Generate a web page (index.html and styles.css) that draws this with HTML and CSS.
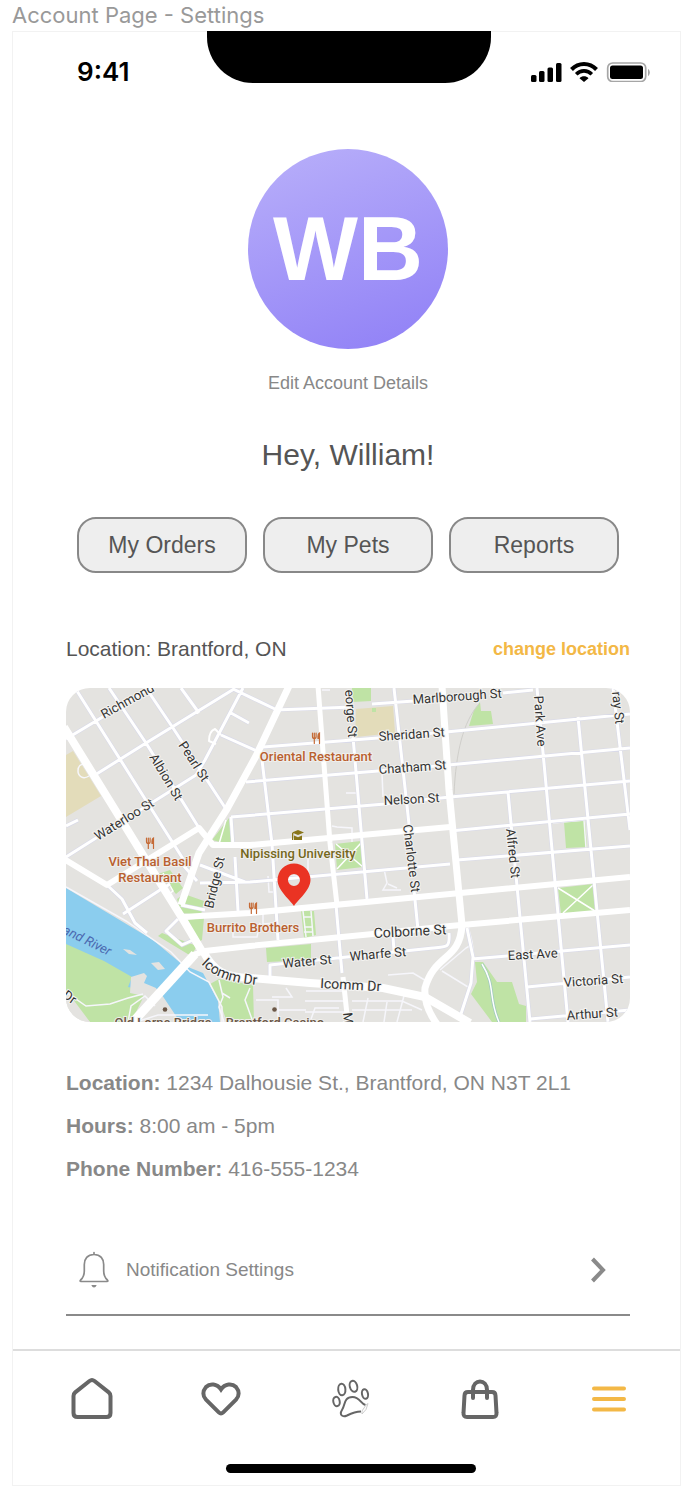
FILE: index.html
```html
<!DOCTYPE html>
<html lang="en">
<head>
<meta charset="utf-8">
<meta name="viewport" content="width=device-width, initial-scale=1">
<title>Account Page - Settings</title>
<link rel="stylesheet" href="styles.css">
</head>
<body>
<p class="frame-label">Account Page - Settings</p>
<div class="screen">
  <header class="status-bar">
    <span class="clock">9:41</span>
    <span class="notch"></span>
    <span class="indicators">
      <svg width="120" height="20" viewBox="0 0 120 20" aria-hidden="true">
        <rect x="1" y="13" width="5.500" height="7" rx="1.500"/>
        <rect x="9" y="9" width="5.500" height="11" rx="1.500"/>
        <rect x="17.500" y="5.500" width="5.500" height="14.500" rx="1.500"/>
        <rect x="26" y="1" width="5.500" height="19" rx="1.500"/>
        <g fill="none" stroke="#000" stroke-width="4">
          <path d="M41.500 7.500C48.500 .2 59.500 .2 66.500 7.500"/>
          <path d="M46.200 12.200C50.600 7.800 57.400 7.800 61.800 12.200" stroke-width="3.600"/>
        </g>
        <path d="M49.500 16.300c2.500-2.600 6.500-2.600 9 0L54 20z"/>
        <rect x="77.700" y="1" width="38" height="18.500" rx="5" fill="none" stroke="#a6a6a6" stroke-width="1.700"/>
        <rect x="80" y="3.500" width="33" height="13.500" rx="2.500"/>
        <path d="M118 7v7c2.400-1.200 2.400-5.800 0-7z" fill="#a6a6a6"/>
      </svg>
    </span>
  </header>

  <main class="content">
    <div class="avatar">WB</div>
    <a class="edit-link" href="#">Edit Account Details</a>
    <h1 class="greeting">Hey, William!</h1>

    <div class="shortcuts">
      <button class="shortcut" type="button">My Orders</button>
      <button class="shortcut" type="button">My Pets</button>
      <button class="shortcut" type="button">Reports</button>
    </div>

    <div class="location-row">
      <h2 class="location-title">Location: Brantford, ON</h2>
      <a class="change-link" href="#">change location</a>
    </div>

    <svg class="map" viewBox="66 688 564 334" role="img" aria-label="Map of Brantford">
      <rect x="66" y="688" width="564" height="334" fill="#e4e3e0"/>
      <!-- sand and parks -->
      <path d="M66 755l7-4 28 45-35 21zM356 709l37-3 2 27-40 4z" fill="#e3dcba"/>
      <g fill="#bfe3a5">
        <path d="M352 688h19v13l-18 1zM372 708h4v4h-4zM480 702l1 9 10 0 2 13-24 2 5-16zM564 822l21-1 2 26-21 1z"/>
        <path d="M229 818l3 27-20-5zM335 844l26-3 2 26-26 3zM558 888l35-4 2 27-34 3zM266 948l45-4v16l-44 2z"/>
        <path d="M301 911h13l2 24-12 3zM158 874l12-4 13 18-7 6zM184 894l20 7-3 14-20-2-4-14zM187 920l17-2-2 22-4 2zM162 933l35 13-6 10-33-20z"/>
        <path d="M475 962h8l14 20h15l7 22 7 2v16h-34l-21-28 6-12z"/>
        <path d="M210 984l9-5 34 6 1 37h-27l-5-14z"/>
      </g>
      <path d="M66 888l47 28 40 24 30 25 20 8 15 28 2 21h-40l-20-30-42-4-52-30z" fill="#8bcdee"/>
      <path d="M66 944l38 17 28 16-4 10 20 4-6 31H90l-24-23z" fill="#bfe3a5"/>
      <path d="M66 990l24 32H66zM131 977l13-4 3 3-3 7 12 5 20 34h-45l13-26-14-3z" fill="#e4e3e0"/>
      <path d="M123 949l7 1 7 5-8-1zM151 963l8-1 6 7-7 1z" fill="#e4e3e0"/>
      <!-- footways and lanes -->
      <g fill="none" stroke="#f6f6fb" stroke-width="1.500">
        <path d="M66 887l60 34 45 31 19 20 19 10 13 25v15M66 992l20 14 24-2 18-6 15-4M128 1022l3-16 14-10 10 10M136 1022l22-7h50"/>
        <path d="M219 980l4 17-4 10 5 15M250 988l-5 12 8 22M222 993l8 5M256 1000h22v22M272 997h20l-6-9M278 1010h28M306 991h40v31M305 1001h40M305 1012h40"/>
        <path d="M352 1001h50l20 9M352 1010h60M388 975l25-2 15 9M440 970l26-22 5-3M442 971l26 16M397 1022l8-30M310 1022l5-14h24M363 1022l5-24 M384 1022l3-20"/>
        <path d="M332 826l5 1 15 1v14M346 793h12M382 773l1 24M322 690h8M268 876l1 16h6M278 877l30-2v-18M384 869l3 14-4 7h18M388 884l9 4"/>
        <path d="M303 911l3 26M311 911l2 25M304 927h8M304 932h8M304 917h8M233 925v12h24l3-14M263 912v12l12-1"/>
        <path d="M553 823l31-3 2 28M468 926l4 16 2 15"/>
        <path d="M89 776c-6 4-11 0-11-5s3-7 6-7"/>
      </g>
      <path d="M479 704c-16 18-23 48-25 90" fill="none" stroke="#cfceca"/>
      <path d="M482 964c14 22 6 34 17 58" fill="none" stroke="#9fc9c0" stroke-width="3"/>
      <path d="M482 964c14 22 6 34 17 58M336 844l27 23M361 843l-24 26M558 888l37 23M593 885l-30 28M226 820l-7 24M163 873l10 18-7 5" fill="none" stroke="#fff" stroke-width="1.500"/>
      <!-- streets: casing first, surface above -->
      <g fill="none" stroke="#d9dae8" stroke-width="4.200" stroke-linejoin="round">
        <use href="#minor"/>
      </g>
      <g fill="none" stroke="#fff" stroke-width="3" stroke-linejoin="round">
        <path id="minor" d="M77 691l70 111 38 60M109 688l37 55 53 85M146 688l27 40 53 81M181 688l18 25M66 739l85-51M95 775l51-32 88-54M66 857l87-55 43-27 9-15 38-72M233 689l44 21M231 713l18 10M221 735l36 16M66 826l12-6M275 710l78-3M372 704l42-3M503 693l30-3M263 747l115-9 68-6 184-18M246 782l132-11 70-6 182-17M231 817l154-13 65-7 180-16M231 817l2 29M262 760l10 84 6 96M353 737l14 162M394 688l15 136M414 890l4 40M537 688l16 172 15 162M578 717l14 143 16 162M613 688l17 142M508 792l22 230M450 831l180-17M457 860l173-14M200 883l50-1 200-18M245 882l-45-17M472 959l158-14M527 987l103-10M530 1019l100-9M270 977v-12l163-17c15-1 17-1 16-15M393 937l1 14M467 928l6 29-2 26-11 34M336 905l6 68M107 885l15 14 13 24 12 10M123 914l37-24 10-6M178 919l-12 12 16 14 11-5M235 857l3 54M181 905l24 5M197 881l-14-16"/>
        <path d="M221 735l-6-6q-6 2-6 12l7 3" stroke-width="2"/>
      </g>
      <g fill="none" stroke="#fff" stroke-linejoin="round">
        <path d="M64 727l82 133 38 61 19 32" stroke-width="8"/>
        <path d="M289 686l-33 70-29 53-28 44-18 52" stroke-width="7"/>
        <path d="M64 859l43 26 92-57 14 17h37l200-18" stroke-width="6"/>
        <path d="M183 917l67-4 200-19 180-17" stroke-width="6"/>
        <path d="M131 1024l62-69 12-4 45-5 123-12 77-8 180-16" stroke-width="6"/>
        <path d="M133 1022l62-68" stroke-width="9"/>
        <path d="M203 951c11 21 22 26 47 27l60 5 73 5 42 9 45 26" stroke-width="8"/>
        <path d="M318 686l12 157 7 62M343 977l5 47" stroke-width="5"/>
        <path d="M442 686l7 104 13 135c-2 36-27 28-37 63-1 12 3 24 12 36" stroke-width="7"/>
      </g>
      <!-- street names -->
      <g class="street">
        <text transform="translate(104 719) rotate(-29)">Richmond</text>
        <text transform="translate(149 757) rotate(59)">Albion St</text>
        <text transform="translate(178 745) rotate(57)">Pearl St</text>
        <text transform="translate(98 841) rotate(-32)">Waterloo St</text>
        <text transform="translate(213 909) rotate(-77)">Bridge St</text>
        <text transform="translate(345 690) rotate(86)">eorge St</text>
        <text transform="translate(413 704) rotate(-4)">Marlborough St</text>
        <text transform="translate(379 741) rotate(-4)">Sheridan St</text>
        <text transform="translate(379 774) rotate(-4)">Chatham St</text>
        <text transform="translate(384 805) rotate(-3)">Nelson St</text>
        <text transform="translate(403 825) rotate(83)">Charlotte St</text>
        <text transform="translate(534 696) rotate(86)">Park Ave</text>
        <text transform="translate(612 692) rotate(84)">ray St</text>
        <text transform="translate(506 829) rotate(84)">Alfred St</text>
        <text class="street-main" transform="translate(374 938) rotate(-3)">Colborne St</text>
        <text transform="translate(283 968) rotate(-5)">Water St</text>
        <text transform="translate(350 961) rotate(-5)">Wharfe St</text>
        <text transform="translate(508 960) rotate(-3)">East Ave</text>
        <text transform="translate(564 987) rotate(-4)">Victoria St</text>
        <text transform="translate(567 1020) rotate(-4)">Arthur St</text>
        <path id="icomm" d="M201 964c16 16 36 20 70 22" fill="none" stroke="none"/>
        <text class="street-main"><textPath href="#icomm">Icomm Dr</textPath></text>
        <text class="street-main" transform="translate(320 988) rotate(3)">Icomm Dr</text>
        <text transform="translate(343 1013) rotate(84)">M</text>
        <text transform="translate(62 997) rotate(35)">Dr</text>
      </g>
      <text class="river" transform="translate(62 933) rotate(26)">and River</text>
      <!-- places -->
      <g class="place food">
        <text x="316" y="761">Oriental Restaurant</text>
        <text x="150" y="866">Viet Thai Basil</text>
        <text x="150" y="882">Restaurant</text>
        <text x="253" y="932">Burrito Brothers</text>
      </g>
      <text class="place school" x="298" y="858">Nipissing University</text>
      <g class="place landmark">
        <text x="163" y="1027">Old Lorne Bridge</text>
        <text x="275" y="1027">Brantford Casino</text>
      </g>
      <g id="cutlery" fill="none" stroke="#c56a35" stroke-linecap="round">
        <path d="M312.500 733v3.500q0 2 1.800 2t1.800-2V733M314.300 733v5M314.300 738.500v5" stroke-width="1.200"/>
        <path d="M319.500 738v-5q-1.800 1-1.500 5.500h1.500v5" fill="#c56a35" stroke-width="1.200"/>
      </g>
      <use href="#cutlery" x="-166" y="105"/>
      <use href="#cutlery" x="-63" y="170"/>
      <path d="M292 832.500l6-2.500 6 2.500-6 2.500zM294 835.500l4 1.700 4-1.700v4.500h-8zM292 833v7h1.300v-7z" fill="#887519"/>
      <circle cx="165" cy="1009.500" r="2.300" fill="#6b5747"/>
      <circle cx="274.500" cy="1009.500" r="2.300" fill="#6b5747"/>
      <path d="M294 906c-4-6-16.500-16-16.500-26a16.500 16.500 0 0 1 33 0c0 10-12.500 20-16.500 26zM294 874a6 6 0 1 0 0 12 6 6 0 1 0 0-12z" fill="#ea3323" fill-rule="evenodd"/>
    </svg>

    <dl class="details">
      <div class="detail"><dt>Location:</dt> <dd>1234 Dalhousie St., Brantford, ON N3T 2L1</dd></div>
      <div class="detail"><dt>Hours:</dt> <dd>8:00 am - 5pm</dd></div>
      <div class="detail"><dt>Phone Number:</dt> <dd>416-555-1234</dd></div>
    </dl>

    <a class="setting" href="#">
      <svg width="30" height="38" viewBox="0 0 30 38" aria-hidden="true">
        <path d="M15 3.500C8.500 3.500 5.300 8 5.300 13.500V20c0 5-1.500 7-3.700 9-.8.900-.6 1.500.4 1.500h26c1 0 1.200-.6.400-1.500-2.200-2-3.700-4-3.700-9v-6.500C24.700 8 21.500 3.500 15 3.500zM15 1.500v2" fill="none" stroke="#8a8a8a" stroke-width="1.700" stroke-linecap="round"/>
        <path d="M12.300 34h5.400q-1 2.500-2.700 2.500T12.300 34z" fill="#8a8a8a"/>
      </svg>
      <span class="setting-name">Notification Settings</span>
      <svg width="16" height="26" viewBox="0 0 16 26" aria-hidden="true">
        <path d="M2.500 2l10.500 11L2.500 24" fill="none" stroke="#8a8a8a" stroke-width="4"/>
      </svg>
    </a>
  </main>

  <footer class="bottom">
    <nav class="tab-bar" aria-label="Main">
      <button class="tab" type="button" aria-label="Home">
        <svg width="44" height="44" viewBox="0 0 44 44"><path d="M3.500 19c0-1.500.5-2.600 1.700-3.600L19.500 4c1.700-1.400 3.300-1.400 5 0l14.300 11.400c1.200 1 1.700 2.100 1.700 3.600v17c0 2.500-1.500 4-4 4h-29c-2.500 0-4-1.500-4-4z"/></svg>
      </button>
      <button class="tab" type="button" aria-label="Favourites">
        <svg width="44" height="44" viewBox="0 0 44 44"><path d="M22 12.500c-4-6-11-6.500-15-2.500-3.500 4.200-3.500 9 0 12.700l12.800 12.700c1.600 1.600 2.800 1.600 4.400 0L37 22.700c3.500-3.700 3.500-8.500 0-12.700-4-4-11-3.500-15 2.500z"/></svg>
      </button>
      <button class="tab" type="button" aria-label="Pets">
        <svg width="44" height="44" viewBox="0 0 44 44">
          <g class="paw">
            <ellipse cx="7.500" cy="24.500" rx="3.200" ry="4.700" transform="rotate(-12 7.500 24.500)"/>
            <ellipse cx="12.800" cy="12.500" rx="3.600" ry="5.800" transform="rotate(-5 12.800 12.500)"/>
            <ellipse cx="24.500" cy="9.300" rx="3.700" ry="5.600" transform="rotate(-16 24.500 9.300)"/>
            <ellipse cx="36" cy="17" rx="3" ry="4.800" transform="rotate(-12 36 17)"/>
            <path d="M36.500 28c-5-1-5.500-8-13-8-9 0-7 8-10.500 13-3 5 .5 7.500 5 5.500 6-3 10-4 14-4"/>
          </g>
          <path class="paw-edge" d="M37 28l2-1.500-2 6-4 4.500v-3z"/>
        </svg>
      </button>
      <button class="tab" type="button" aria-label="Shop">
        <svg width="44" height="44" viewBox="0 0 44 44"><path d="M6.500 18.500c.1-2.200 1.200-3.500 3.500-3.500h24c2.300 0 3.400 1.300 3.500 3.500L38.500 36c.2 2.500-1 4-3.500 4H9c-2.500 0-3.700-1.500-3.500-4zM15 21v-8c0-11.500 14-11.500 14 0v8" stroke-linecap="round"/></svg>
      </button>
      <button class="tab tab-active" type="button" aria-label="Menu">
        <svg width="44" height="44" viewBox="0 0 44 44"><path d="M7 11.500h30M7 22h30M7 32.500h30" stroke-linecap="round"/></svg>
      </button>
    </nav>
    <div class="home-indicator"></div>
  </footer>
</div>
</body>
</html>
```
FILE: styles.css
```css
* {
  box-sizing: border-box;
}

body {
  margin: 0;
  background: #fff;
  color: #555;
  font-family: "Liberation Sans", Arial, sans-serif;
}

a {
  color: inherit;
  text-decoration: none;
}

.frame-label {
  margin: 0;
  padding: 2px 12px 3px;
  color: #999;
  font: 22px/26px Inter, sans-serif;
}

.screen {
  margin: 0 15px 20px 12px;
  border: 1px solid #f2f2f2;
}

.status-bar {
  display: grid;
  grid-template-columns: 1fr 284px 1fr;
  margin-top: -1px;
  padding-left: 5px;
  color: #000;
}

.clock {
  padding: 25px 0 0 59px;
  font: 600 26px/32px Inter, sans-serif;
}

.notch {
  height: 52px;
  background: #000;
  border-radius: 0 0 46px 46px;
}

.indicators {
  display: flex;
  justify-content: flex-end;
  padding: 31px 30px 0 0;
}

.content {
  display: flex;
  flex-direction: column;
  padding: 61px 50px 0 53px;
}

.avatar {
  display: grid;
  place-items: center;
  align-self: center;
  width: 200px;
  height: 200px;
  border-radius: 50%;
  background: linear-gradient(160deg, #b9b0fa, #8f7ff6);
  color: #fff;
  font-size: 90px;
  font-weight: 700;
  line-height: 100px;
}

.edit-link {
  align-self: center;
  margin-top: 22px;
  color: #888;
  font-size: 18px;
  line-height: 24px;
}

.greeting {
  margin: 40px 0 0;
  font-size: 30px;
  font-weight: 400;
  line-height: 40px;
  text-align: center;
}

.shortcuts {
  display: grid;
  grid-template-columns: repeat(3, 1fr);
  gap: 16px;
  margin-top: 42px;
  padding: 0 11px;
}

.shortcut {
  height: 56px;
  padding: 0;
  border: 2px solid #888;
  border-radius: 19px;
  background: #eee;
  color: #555;
  font: inherit;
  font-size: 23px;
}

.location-row {
  display: flex;
  align-items: center;
  justify-content: space-between;
  margin-top: 60px;
}

.location-title {
  margin: 0;
  font-size: 21px;
  font-weight: 400;
  line-height: 32px;
}

.change-link {
  color: #f3b846;
  font-size: 18px;
  font-weight: 700;
}

.map {
  display: block;
  width: 100%;
  margin-top: 23px;
  border-radius: 24px;
  font-family: Roboto, sans-serif;
}

.street {
  fill: #333;
  stroke: #f4f3f1;
  stroke-width: 2px;
  paint-order: stroke;
  font-size: 13px;
}

.street-main {
  font-size: 14px;
}

.river {
  fill: #4a68b0;
  font-size: 13px;
  font-style: italic;
}

.place {
  stroke: #f0efec;
  stroke-width: 2px;
  paint-order: stroke;
  font-size: 13px;
  font-weight: 500;
  text-anchor: middle;
}

.food {
  fill: #b9602f;
}

.school {
  fill: #75681c;
}

.landmark {
  fill: #6b5747;
}

.details {
  margin: 39px 0 0;
  color: #888;
  font-size: 21px;
  line-height: 43px;
}

.detail dt,
.detail dd {
  display: inline;
  margin: 0;
}

.detail dt {
  font-weight: 700;
}

.setting {
  display: flex;
  align-items: center;
  margin-top: 61px;
  padding: 0 24px 25px 13px;
  border-bottom: 2px solid #8a8a8a;
  color: #888;
  font-size: 19px;
}

.setting-name {
  flex: 1;
  padding-left: 17px;
}

.bottom {
  margin-top: 33px;
  padding: 26px 49px 12px 57px;
  border-top: 2px solid #ddd;
}

.tab-bar {
  display: flex;
  justify-content: space-between;
}

.tab {
  padding: 0;
  border: 0;
  background: none;
  color: #666;
}

.tab svg {
  display: block;
  fill: none;
  stroke: currentColor;
  stroke-width: 4px;
}

.tab .paw {
  stroke-width: 2px;
}

.tab .paw-edge {
  stroke: #ccc;
  stroke-width: 1px;
}

.tab-active {
  color: #f3b846;
}

.home-indicator {
  width: 250px;
  height: 9px;
  margin: 43px auto 0;
  border-radius: 5px;
  background: #000;
}
```
